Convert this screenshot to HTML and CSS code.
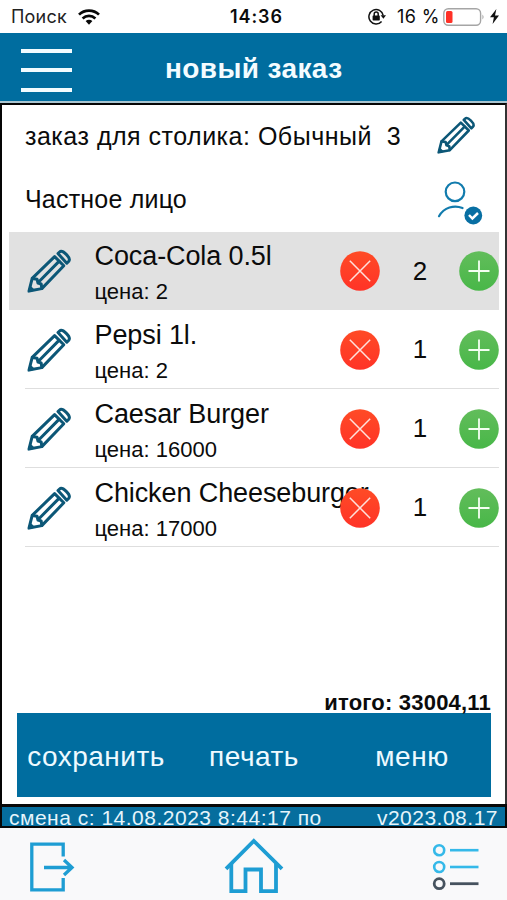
FILE: index.html
```html
<!DOCTYPE html>
<html lang="ru">
<head>
<meta charset="utf-8">
<title>Новый заказ</title>
<link rel="stylesheet" href="styles.css">
</head>
<body>
<svg class="defs" width="0" height="0">
  <defs>
    <linearGradient id="red" x1="0" y1="0" x2="0" y2="1"><stop offset="0" stop-color="#ff4b26"/><stop offset="1" stop-color="#ff3327"/></linearGradient>
    <linearGradient id="green" x1="0" y1="0" x2="0" y2="1"><stop offset="0" stop-color="#62bd5b"/><stop offset="1" stop-color="#48b748"/></linearGradient>
    <symbol id="pencil" viewBox="0 0 44 44">
      <g fill="none" stroke="#0c5777" stroke-width="3" stroke-linejoin="round" stroke-linecap="round">
        <path d="M2 42 5.200 29.400 27.600 7.600 36.800 16.800 14.800 39.600Z"/>
        <path d="M5.400 29.400 10 30.200 11 34 14.200 35 14.800 39.400M11.400 33.200 32 12.400"/>
        <path d="M31 4.600 32.600 3C35.500 .2 44.400 9 41.800 12.200L39.800 14.200Z"/>
      </g>
      <path d="M.6 43.500 2.800 36 8.400 41.400Z" fill="#0c5777"/>
    </symbol>
    <symbol id="remove" viewBox="0 0 40 40">
      <circle cx="20" cy="20" r="19.8" fill="url(#red)"/>
      <path d="M9.8 9.8 30.2 30.2M30.2 9.8 9.8 30.2" stroke="#ffe1dc" stroke-width="1.5"/>
    </symbol>
    <symbol id="add" viewBox="0 0 40 40">
      <circle cx="20" cy="20" r="19.8" fill="url(#green)"/>
      <path d="M9.5 20H30.5M20 9.5V30.5" stroke="#f4fff2" stroke-width="1.8"/>
    </symbol>
  </defs>
</svg>

<div class="status">
  <span class="carrier">Поиск</span>
  <svg class="wifi" width="22" height="16" viewBox="0 0 22 16"><g fill="none" stroke="#080808" stroke-width="2.7"><path d="M1 5.6C6.5.2 15.500.2 21 5.600"/><path d="M4.600 9.400C8.300 6 13.700 6 17.400 9.400"/></g><path d="M7.600 12.100C9.600 10.300 12.400 10.300 14.400 12.100L11 15.700Z" fill="#080808"/></svg>
  <span class="clock">14:36</span>
  <svg class="lock" width="18" height="17" viewBox="0 0 18 17"><path d="M13.600 13.400A7.200 7.200 0 1 1 15.200 7.500" fill="none" stroke="#111" stroke-width="1.500"/><path d="M12.600 7.300H18L15.400 10.700Z" fill="#111"/><rect x="4.600" y="7.400" width="7.200" height="5" rx=".7" fill="#111"/><path d="M6.200 8V6A2 2 0 0 1 10.200 6V8" fill="none" stroke="#111" stroke-width="1.500"/></svg>
  <span class="percent">16 %</span>
  <svg class="battery" width="42" height="18" viewBox="0 0 42 18"><rect x=".8" y=".8" width="36.800" height="16.400" rx="4.500" fill="#fff" stroke="#a5a5a5" stroke-width="1.400"/><rect x="3" y="3" width="6.500" height="12" rx="1.500" fill="#ff3127"/><path d="M39.500 6.500Q41.500 9 39.500 11.500Z" fill="#999"/></svg>
  <svg class="bolt" width="9" height="15" viewBox="0 0 9 15"><path d="M6.400 0 0 8.300H3.900L2.600 15 9 6.400H5Z" fill="#111"/></svg>
</div>

<header class="header">
  <div class="burger"><i></i><i></i><i></i></div>
  <h1 class="title">новый заказ</h1>
</header>

<main class="panel">
  <div class="field table-field"><span class="field-text table-text">заказ для столика: Обычный&nbsp; 3</span><svg class="table-pencil" width="38" height="38"><use href="#pencil"/></svg></div>
  <div class="field client-field"><span class="field-text client-text">Частное лицо</span>
    <svg class="user" width="46" height="44" viewBox="0 0 46 44"><g fill="none" stroke="#117bad" stroke-width="2.200" stroke-linecap="round"><circle cx="18" cy="10.800" r="9.300"/><path d="M2 35.200C7 26.500 17 23.500 25.500 27"/></g><circle cx="36.300" cy="34.500" r="8.900" fill="#086fa3"/><path d="M32 34 35.400 37.500 41 32" fill="none" stroke="#fff" stroke-width="2.500"/></svg>
  </div>
  <ul class="items">
    <li class="item selected"><svg class="edit" width="44" height="44"><use href="#pencil"/></svg><div class="info"><div class="name">Coca-Cola 0.5l</div><div class="price">цена: 2</div></div><svg class="remove" width="40" height="40"><use href="#remove"/></svg><span class="count">2</span><svg class="add" width="40" height="40"><use href="#add"/></svg></li>
    <li class="item"><svg class="edit" width="44" height="44"><use href="#pencil"/></svg><div class="info"><div class="name">Pepsi 1l.</div><div class="price">цена: 2</div></div><svg class="remove" width="40" height="40"><use href="#remove"/></svg><span class="count">1</span><svg class="add" width="40" height="40"><use href="#add"/></svg></li>
    <li class="item"><svg class="edit" width="44" height="44"><use href="#pencil"/></svg><div class="info"><div class="name">Caesar Burger</div><div class="price">цена: 16000</div></div><svg class="remove" width="40" height="40"><use href="#remove"/></svg><span class="count">1</span><svg class="add" width="40" height="40"><use href="#add"/></svg></li>
    <li class="item"><svg class="edit" width="44" height="44"><use href="#pencil"/></svg><div class="info"><div class="name">Chicken Cheeseburger</div><div class="price">цена: 17000</div></div><svg class="remove" width="40" height="40"><use href="#remove"/></svg><span class="count">1</span><svg class="add" width="40" height="40"><use href="#add"/></svg></li>
  </ul>
  <div class="total">итого: 33004,11</div>
  <div class="actions"><span class="action">сохранить</span><span class="action">печать</span><span class="action">меню</span></div>
</main>

<div class="shift"><span class="shift-from">смена с: 14.08.2023 8:44:17 по</span><span class="version">v2023.08.17</span></div>

<nav class="tabs">
  <svg class="exit" width="46" height="52" viewBox="0 0 46 52"><g fill="none" stroke="#1e9dd3" stroke-width="3.300"><path d="M34.200 15.500V3.200H2.800V48.800H34.200V37"/><path d="M15 26.500H43M35 19 43 26.500 35 34"/></g></svg>
  <svg class="home" width="60" height="57" viewBox="0 0 60 57"><g fill="none" stroke="#1e9dd3" stroke-width="3.800"><path d="M2 30.800 29.800 3 58 30.800"/><path d="M7.300 25.500V53.200H21.500V31.500H37V53.200H52V25.500"/></g></svg>
  <svg class="list" width="48" height="48" viewBox="0 0 48 48"><g fill="none" stroke="#35b9e9" stroke-width="2.600"><circle cx="7.200" cy="7.200" r="5"/><path d="M18 7.200H46.500"/><circle cx="7.200" cy="24" r="5"/><path d="M18 24H46.500"/></g><g fill="none" stroke="#46525e" stroke-width="2.800"><circle cx="7.200" cy="40.700" r="5"/><path d="M18 40.700H46.500"/></g></svg>
</nav>
</body>
</html>
```
FILE: styles.css
```css
* { box-sizing: border-box; }
body { margin: 0; width: 507px; height: 900px; display: flex; flex-direction: column; background: #fff; color: #0b0b0b; font-family: "Liberation Sans", Arial, sans-serif; overflow: hidden; }
svg { display: block; flex: none; }
span, .name, .price, .total, .title { white-space: nowrap; }
.defs { position: absolute; }

.status { height: 33px; flex: none; display: flex; align-items: center; padding: 0 7px 0 11px; font-family: Inter, sans-serif; font-size: 18px; line-height: 33px; }
.carrier { width: 67px; letter-spacing: .2px; color: #222; }
.clock { width: 138px; margin-left: 130px; font-weight: 600; letter-spacing: .9px; }
.percent { width: 46px; margin-left: 11px; letter-spacing: .4px; }
.bolt { margin-left: 5px; }

.header { height: 70px; flex: none; display: flex; align-items: center; padding: 0 0 1px 21px; background: #006d9f; border-bottom: 2px solid #a9c5d0; }
.burger { width: 51px; height: 43px; margin-top: 7px; display: flex; flex-direction: column; justify-content: space-between; }
.burger i { height: 4px; background: #f2fcff; }
.title { margin: 5px 0 0 93px; font-size: 28px; line-height: 34px; letter-spacing: .4px; color: #f4fcff; }

.panel { height: 701px; flex: none; display: flex; flex-direction: column; border: solid #050505; border-width: 2px 2px 0; border-right-color: #333; }
.field { display: flex; justify-content: space-between; padding-left: 23px; }
.field-text { font-size: 25px; line-height: 30px; }
.table-field { height: 66px; padding-right: 30px; }
.table-text { margin-top: 16px; letter-spacing: .5px; }
.table-pencil { margin-top: 11px; }
.client-field { height: 61px; padding-right: 22px; }
.client-text { margin-top: 13px; letter-spacing: .2px; }
.user { margin-top: 10px; }

.items { list-style: none; margin: 0 6px 0 7px; padding: 0; }
.item { height: 79px; display: flex; align-items: center; padding-left: 18px; background: linear-gradient(#dedede, #dedede) 16px 78px / 474px 1px no-repeat; }
.item.selected { background: #e1e1e1; height: 78px; }
.info { width: 245.500px; flex: none; margin-left: 23.500px; align-self: flex-start; padding-top: 9px; }
.selected .info { padding-top: 8px; }
.name { font-size: 27px; line-height: 32px; letter-spacing: -.1px; }
.price { margin-top: 7px; font-size: 22px; line-height: 26px; }
.remove { position: relative; z-index: 1; }
.count { width: 40px; margin-left: 20px; text-align: center; font-size: 26px; }
.add { margin-left: 19px; }

.total { position: relative; z-index: 1; margin: auto 14px -1px 0; text-align: right; font-size: 22px; font-weight: 700; line-height: 23px; letter-spacing: .2px; }
.actions { height: 84px; margin: 0 14px 7px 15px; padding-top: 3px; flex: none; display: grid; grid-template-columns: 1fr 1fr 1fr; align-items: center; text-align: center; background: #006d9f; color: #eefaff; font-size: 28px; letter-spacing: .5px; }
.shift { height: 24px; flex: none; display: flex; justify-content: space-between; align-items: center; padding: 2px 7px 0; border: 2px solid #080808; border-top-width: 3px; background: #066e9e; color: #e6f5fb; font-size: 21px; line-height: 20px; letter-spacing: .5px; }
.tabs { height: 72px; flex: none; display: flex; align-items: flex-start; background: #f9f9fa; }
.exit { margin: 13px 0 0 29px; }
.home { margin: 10px 0 0 149px; }
.list { margin: 15px 0 0 148px; }
```
